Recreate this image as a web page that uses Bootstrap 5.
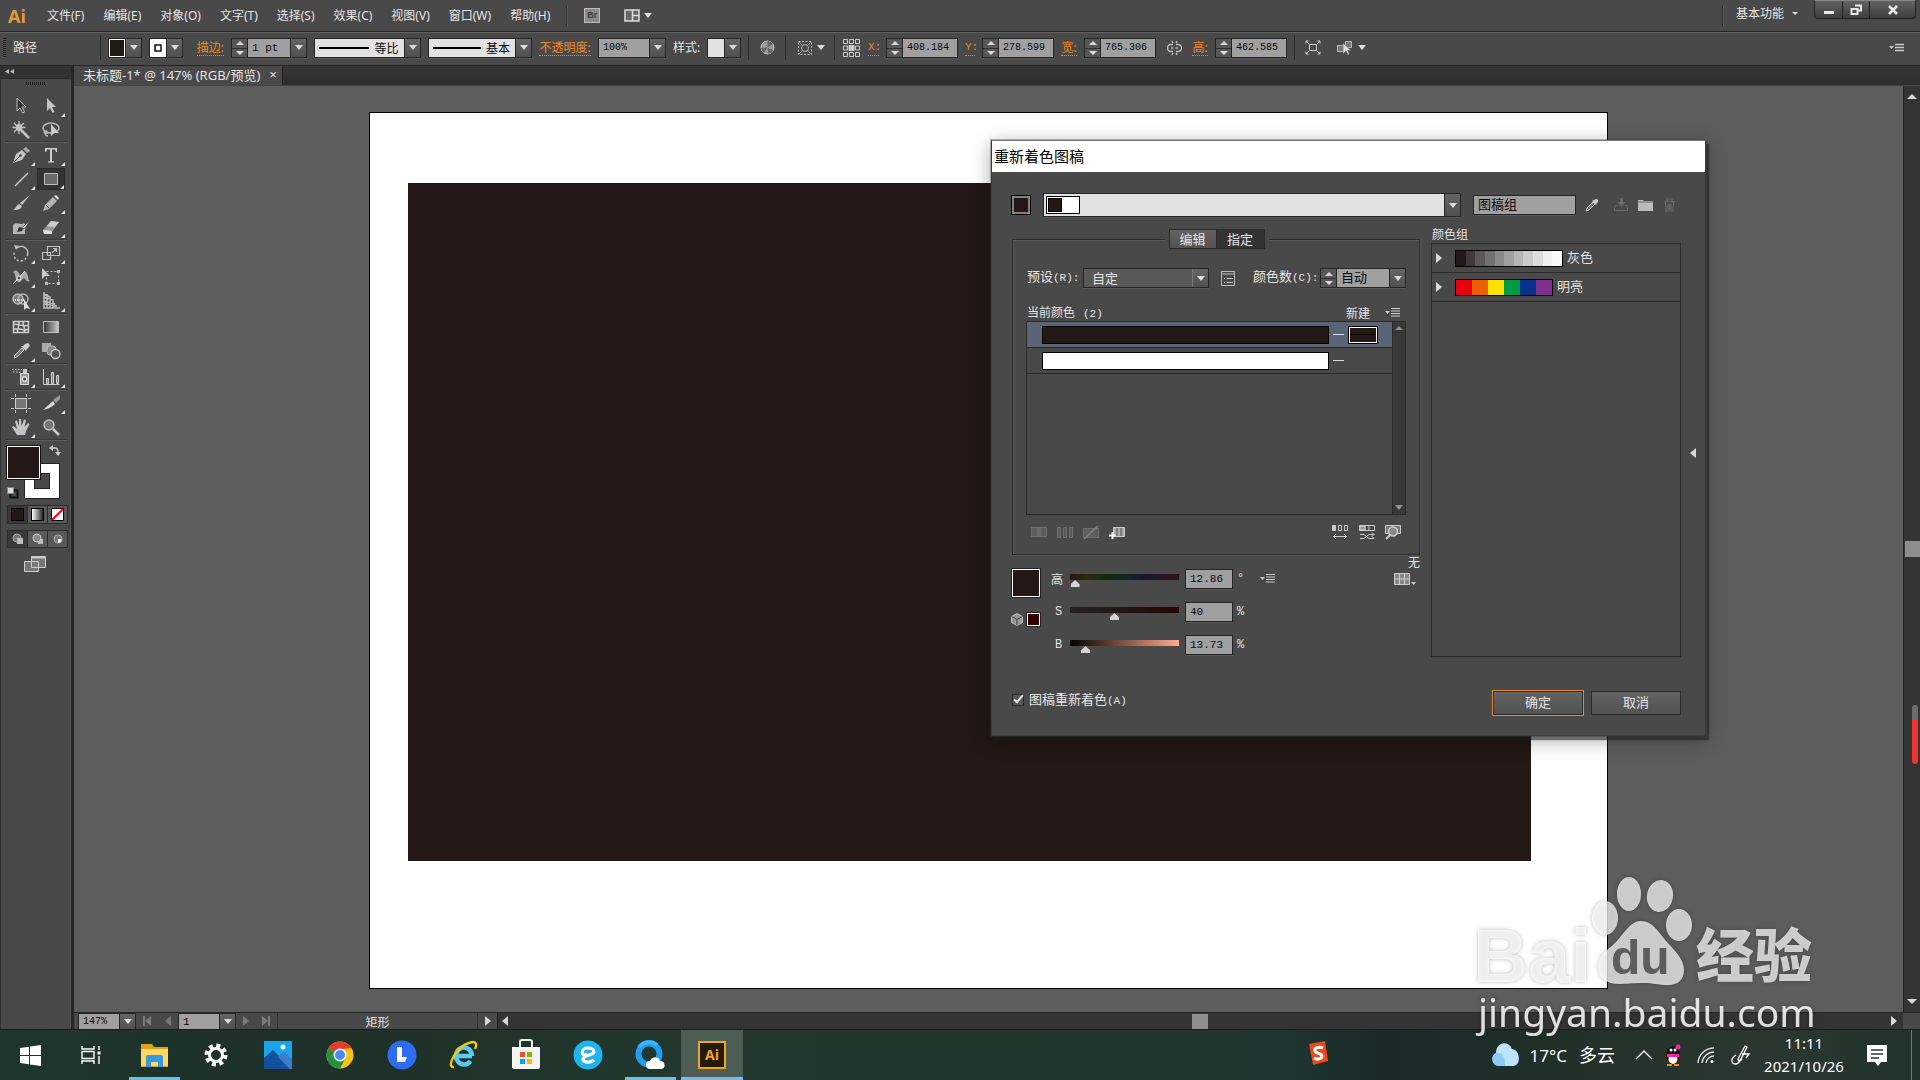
<!DOCTYPE html>
<html lang="zh-CN">
<head>
<meta charset="utf-8">
<meta name="viewport" content="width=device-width, initial-scale=1">
<title>未标题-1 - Adobe Illustrator</title>
<link href="https://cdn.jsdelivr.net/npm/bootstrap@5.3.0/dist/css/bootstrap.min.css" rel="stylesheet">
<style>
:root{--panel:#494949;--line:#252525;--light:#626262;--field:#a0a0a0;--ink:#e4e4e4;--orange:#e98a28;--art:#231815}
body{font:12px/16px "Noto Sans","Noto Sans CJK SC",sans-serif;color:var(--ink);background:#5d5d5d;overflow:hidden}
button,input,select{font:inherit;color:inherit;border:0;padding:0;margin:0;background:none;border-radius:0}
select{appearance:none;min-width:0}
svg{display:block;flex:none}
.ui-cjk{font-family:"Noto Sans CJK SC",sans-serif}
.ui-mono{font-family:"Liberation Mono","Noto Sans CJK SC",monospace}
.m10{font-size:10px}.m11{font-size:11px}
/* application bar */
.appbar{height:31px;background:var(--panel)}
.applogo{width:47px;padding-left:8px;font:700 18px/24px "Noto Sans",sans-serif;color:#dc9c3c}
.menus{gap:19px}
.vsep{width:1px;background:#333;border-right:1px solid #585858;box-sizing:content-box}
.brbox{width:16px;height:15px;background:#8a8a8a;border:1px solid #bbb;color:#3c3c3c;font:700 9px/13px "Liberation Sans",sans-serif}
.winbtns{height:19px;background:linear-gradient(#626262,#3e3e3e);border:1px solid #222;border-top-color:#888;border-radius:0 0 4px 4px;align-self:flex-start}
.winbtns button+button{border-left:1px solid #222}
/* control bar */
.ctrlbar{height:35px;background:var(--panel);border-top:1px solid var(--line);border-bottom:1px solid var(--line);box-shadow:inset 0 1px 0 var(--light);gap:7px;padding:0 4px 2px 3px}
.ctrlbar>*{flex:none}
.ctrlbar .vsep{height:25px;width:1px;box-sizing:border-box;border:0;background:#303030}
.grip{width:3px;height:20px;background:repeating-linear-gradient(#1c1c1c 0 1px,#555 1px 2px)}
.olabel{color:var(--orange);border-bottom:1px dotted var(--orange);line-height:15px;text-decoration:none;white-space:nowrap;text-align:center}
.olabel:hover{color:#ffab52}
.fld{border:1px solid var(--line);height:20px;background:var(--field);color:#0a0a0a;box-shadow:0 1px 0 #575757}
.fld input,.fld select{flex:1;min-width:0;width:0;height:18px;padding-left:4px;outline:0}
.btnface{width:16px;background:linear-gradient(#646464,#505050);border-left:1px solid var(--line);flex:none}
.dn:after{content:"";width:0;height:0;border:4px solid transparent;border-top:5px solid #dcdcdc;border-bottom:0}
.up:after{content:"";width:0;height:0;border:4px solid transparent;border-bottom:4px solid #d5d5d5;border-top:0}
.tiny:after{border-width:3px;border-top-width:3px}
.spin{width:16px;border-right:1px solid var(--line);background:#575757;flex:none}
.spin button{height:9px}.spin button+button{border-top:1px solid #303030}
.spin .dn:after{border-top-width:4px}
.pale{background:#e2e2e2}
.stroke-line{height:2px;background:#000;flex:none}
/* toolbox */
.toolbox{width:74px;background:var(--panel);border-left:1px solid #303030;border-right:3px solid #262626;box-shadow:inset -1px 0 0 #555}
.toolhead{height:13px;background:#323232;border-bottom:1px solid #282828;width:70px}
.toolgrid{display:grid;grid-template-columns:30px 30px;margin-left:5px;width:61px;padding-bottom:1px;border-top:1px solid #5b5b5b;box-shadow:0 -1px 0 #383838}
.toolgrid.first{border-top:0;box-shadow:none;padding-bottom:0}
.tool{height:24px;position:relative}
.tool svg{width:20px;height:20px}
.tool.more:after{content:"";position:absolute;right:1px;bottom:1px;border-left:4px solid transparent;border-bottom:4px solid #ddd}
.tool.on{background:#333;outline:1px solid #2a2a2a;outline-offset:-1px;margin:1px;height:22px}
.fillstroke{height:59px;position:relative;margin-left:5px}
.fillbox{position:absolute;left:0;top:3px;width:35px;height:35px;background:var(--art);border:1px solid #111;box-shadow:inset 0 0 0 1px #fff;z-index:1}
.strokebox{position:absolute;left:18px;top:21px;width:36px;height:36px;border:10px solid #fff;outline:1px solid #222;outline-offset:-1px;box-shadow:inset 0 0 0 1px #222}
.modes{margin-left:6px;width:61px;border:1px solid #2b2b2b;background:#595959}
.modes>button{flex:1}.modes>button+button{border-left:1px solid #2b2b2b}
/* document */
.tabbar{height:20px;background:linear-gradient(#363636,#2d2d2d);border-bottom:1px solid #444}
.doctab{background:var(--panel);border-right:1px solid #222;padding:0 5px 0 9px;gap:9px;font-size:13px;line-height:19px}
.canvas{background:#5d5d5d;position:relative;overflow:visible}
.artboard{position:absolute;left:295px;top:26px;width:1239px;height:877px;background:#fff;border:1px solid #000}
.artrect{position:absolute;left:38px;top:70px;width:1123px;height:678px;background:var(--art)}
.vbar{width:17px;background:#343434;border-left:1px solid #222;position:relative}
.vbar .thumb{height:16px;width:15px;background:#8e8e8e}
.vbar .up:after{border-width:5px;border-top-width:0}
.vbar .dn:after{border-width:5px;border-bottom-width:0}
.statusbar{height:17px;background:var(--panel);border-top:1px solid #262626}
.statusbar .fld{height:16px;border-bottom:0}
.statusbar .fld input{height:15px}
.statusbar .hbar{background:#343434;border-left:1px solid #222;padding:0 6px 0 4px}
.tri-l:after{content:"";border:5px solid transparent;border-right:6px solid #d8d8d8;border-left:0}
.tri-r:after{content:"";border:5px solid transparent;border-left:6px solid #d8d8d8;border-right:0}
.dim{opacity:.35}
.endl{border-left:2px solid #d8d8d8}
.endr{border-right:2px solid #d8d8d8}
.redbar{position:absolute;right:2px;top:619px;width:6px;height:59px;border-radius:3px;background:linear-gradient(#6c6c6c 15px,#ef3434 15px)}
/* recolor window */
.recolor{position:absolute;left:917px;top:54px;width:715px;background:var(--panel);border:1px solid #3a3a3a;border-top-color:#777;box-shadow:0 0 0 1px rgba(60,60,60,.35),3px 4px 1px rgba(30,30,30,.55),0 4px 18px rgba(0,0,0,.35);z-index:5;font-family:"Noto Sans CJK SC",sans-serif}
.rtitle{height:31px;background:#fff;color:#000;font-size:15px;line-height:29px;padding-left:2px}
.rbody{padding:21px 24px 19px 19px;position:relative}
.sw{border:1px solid #000;background:var(--art)}
.icbtn{width:24px;height:20px;display:flex;align-items:center;justify-content:center}
.assignbox{border:1px solid #2a2a2a;box-shadow:1px 1px 0 #575757,inset 1px 1px 0 #575757;margin:-10px 0 0 1px;padding:28px 13px 13px}
.tabs2{background:var(--panel);padding:0 4px;position:relative;z-index:1;margin-left:2px}
.tabs2 button{width:48px;height:20px;border:1px solid #2a2a2a;background:linear-gradient(#626262,#525252);font-size:13px;line-height:15px;padding-bottom:2px}
.tabs2 button.on{background:#333;border-left:0}
.t13{font-size:13px}
.clist{height:194px;border:1px solid #2a2a2a}
.crow{height:26px;border-bottom:1px solid #2a2a2a;padding:0 14px 0 15px;gap:4px}
.crow.on{background:#5a6475}
.cbar{width:287px;height:18px;border:1px solid #000}
.cdash{width:11px;height:1px;background:#ddd}
.cscroll{width:14px;background:#383838;border-left:1px solid #2a2a2a}
.cscroll .up:after,.cscroll .dn:after{opacity:.55}
.sl{appearance:none;display:block;width:109px;height:14px;background-size:100% 6px;background-repeat:no-repeat;position:relative;outline:0;margin-top:5px}
.sl::-webkit-slider-runnable-track{height:14px}
.sl::-webkit-slider-thumb{appearance:none;width:9px;height:7px;margin-top:6px;background:#d6d6d6;clip-path:polygon(50% 0,100% 60%,100% 100%,0 100%,0 60%)}
.sl.h{background-image:linear-gradient(90deg,#2a1614,#29290f,#15290f,#122923,#141a2c,#29152a,#2a1614)}
.sl.s{background-image:linear-gradient(90deg,#232323,#230800)}
.sl.b{background-image:linear-gradient(90deg,#000,#ffac90)}
.hsb{gap:14px;padding-top:1px}
.hsbrow{height:19px}
.hsbrow label{width:19px}
.hsbrow .fld{width:48px;margin:0 4px 0 6px}
.ck{appearance:none;width:12px;height:12px;border:1px solid #2a2a2a;background:#555;position:relative}
.ck:checked:after{content:"";position:absolute;left:3px;top:-2px;width:5px;height:10px;border:solid #e8e8e8;border-width:0 2px 2px 0;transform:rotate(40deg)}
.glist{height:414px;border:1px solid #2a2a2a}
.grow{height:29px;border-bottom:1px solid #2a2a2a;font-size:13px;line-height:14px}
.grow span+span{padding-bottom:3px}
.strip{border:1px solid #000;height:17px}
.rbtn{width:90px;height:24px;border:1px solid #2a2a2a;background:linear-gradient(#636363,#525252);font-size:13px;padding-bottom:2px}
.rbtn.ok{outline:1px solid var(--orange)}
/* watermark */
.wmark{position:absolute;left:1390px;top:780px;z-index:6;pointer-events:none;filter:drop-shadow(0 0 2px rgba(0,0,0,.35))}
/* taskbar */
.taskbar{height:51px;background:linear-gradient(90deg,#1e352e 0,#1d3029 15%,#22372d 35%,#20362e 60%,#1f352f 67%,#1a2a2b 72%,#1f3029 80%,#2b3730 92%,#1f332c 100%);border-top:1px solid #1c1c1c}
.tk{width:62px;position:relative}
.tk.run:after{content:"";position:absolute;left:6px;right:5px;bottom:0;height:3px;background:#76b9ed}
.tk.act{background:#4c5e55}.tk.act:after{left:0;right:0}
.tray{font:17px/20px "Noto Sans","Noto Sans CJK SC",sans-serif;color:#fff}
.clock{font-size:15px;line-height:23px;width:106px}
</style>
<script src="https://cdn.jsdelivr.net/npm/bootstrap@5.3.0/dist/js/bootstrap.bundle.min.js"></script>
</head>
<body class="vh-100 d-flex flex-column">

<header class="appbar d-flex align-items-center flex-shrink-0">
  <div class="applogo">Ai</div>
  <nav class="menus d-flex">
    <button>文件(F)</button><button>编辑(E)</button><button>对象(O)</button><button>文字(T)</button><button>选择(S)</button><button>效果(C)</button><button>视图(V)</button><button>窗口(W)</button><button>帮助(H)</button>
  </nav>
  <div class="vsep ms-3" style="height:20px"></div>
  <button class="brbox ms-3" aria-label="Bridge">Br</button>
  <button class="ms-4 d-flex align-items-center gap-1 dn" aria-label="排列文档"><svg width="16" height="13"><path d="M1 1h14v11H1zM8.500 1v11M8.500 6.500H15" fill="#666" stroke="#ddd" stroke-width="1.500"/></svg></button>
  <div class="ms-auto d-flex align-items-center h-100">
    <div class="vsep" style="height:20px"></div>
    <button class="ms-2 ps-1 d-flex align-items-center dn tiny gap-2 me-3" style="padding:0 0 4px">基本功能</button>
    <div class="winbtns d-flex me-1">
      <button style="width:27px" class="d-flex justify-content-center align-items-center" aria-label="最小化"><svg width="12" height="12"><path d="M1 7h10v3H1z" fill="#e8e8e8"/></svg></button>
      <button style="width:27px" class="d-flex justify-content-center align-items-center" aria-label="还原"><svg width="13" height="12"><path d="M5 1.500h6v5H8M1.500 5h6v5h-6z" fill="none" stroke="#e8e8e8" stroke-width="2"/></svg></button>
      <button style="width:46px" class="d-flex justify-content-center align-items-center" aria-label="关闭"><svg width="12" height="12"><path d="M2 2l8 8M10 2l-8 8" stroke="#e8e8e8" stroke-width="2.600"/></svg></button>
    </div>
  </div>
</header>

<div class="ctrlbar d-flex align-items-center flex-shrink-0">
  <div class="grip"></div>
  <div style="width:80px">路径</div>
  <div class="vsep"></div>
  <button class="fld d-flex" style="width:34px" aria-label="填色"><span class="flex-fill h-100" style="background:var(--art);box-shadow:inset 0 0 0 1px #fff"></span><span class="btnface h-100 dn d-flex align-items-center justify-content-center"></span></button>
  <button class="fld d-flex" style="width:34px" aria-label="描边颜色"><span class="flex-fill h-100 bg-white d-flex align-items-center justify-content-center"><svg width="8" height="8"><path d="M1 1h6v6H1z" fill="#fff" stroke="#111" stroke-width="1.500"/></svg></span><span class="btnface h-100 dn d-flex align-items-center justify-content-center"></span></button>
  <div class="text-end" style="width:34px"><a href="#" class="olabel d-inline-block">描边:</a></div>
  <div class="fld d-flex ui-mono m11" style="width:76px"><span class="spin d-flex flex-column"><button class="up d-flex justify-content-center align-items-center" aria-label="增加"></button><button class="dn d-flex justify-content-center align-items-center" aria-label="减少"></button></span><input value="1 pt" aria-label="描边粗细"><button class="btnface dn d-flex align-items-center justify-content-center" aria-label="选择粗细"></button></div>
  <button class="fld pale d-flex align-items-center ui-cjk" style="width:107px" aria-label="宽度配置"><span class="stroke-line ms-1" style="width:50px"></span><span class="flex-fill text-center">等比</span><span class="btnface h-100 dn d-flex align-items-center justify-content-center"></span></button>
  <button class="fld pale d-flex align-items-center ui-cjk" style="width:104px" aria-label="画笔"><span class="stroke-line ms-1" style="width:48px"></span><span class="flex-fill text-center">基本</span><span class="btnface h-100 dn d-flex align-items-center justify-content-center"></span></button>
  <a href="#" class="olabel" style="width:52px">不透明度:</a>
  <div class="fld d-flex ui-mono m10" style="width:68px"><input value="100%" aria-label="不透明度"><button class="btnface dn d-flex align-items-center justify-content-center" aria-label="选择不透明度"></button></div>
  <div style="width:27px;white-space:nowrap">样式:</div>
  <button class="fld d-flex pale" style="width:34px" aria-label="样式"><span class="flex-fill"></span><span class="btnface h-100 dn d-flex align-items-center justify-content-center"></span></button>
  <div class="vsep"></div>
  <button class="d-flex justify-content-center" style="width:22px" aria-label="重新着色图稿"><svg width="15" height="15"><circle cx="7.500" cy="7.500" r="6.500" fill="#999" stroke="#bbb"/><path d="M7.500 7.500V1A6.500 6.500 0 0 1 13 4zM7.500 7.500L1 8a6.500 6.500 0 0 0 3 5zM7.500 7.500l6 3a6.500 6.500 0 0 1-5 3.500z" fill="#666"/></svg></button>
  <div class="vsep"></div>
  <button class="d-flex align-items-center justify-content-between dn" style="width:34px;padding:0 2px 0 4px" aria-label="对齐"><svg width="16" height="16" fill="none" stroke="#bbb"><path d="M1.500 1.500h13v13h-13z" stroke-dasharray="2 1.500"/><circle cx="8" cy="8" r="3.500"/><path d="M2 2l4 4M14 2l-4 4M2 14l4-4M14 14l-4-4" stroke="#999"/></svg></button>
  <div class="vsep"></div>
  <button style="width:19px" aria-label="参考点"><svg width="19" height="20" fill="none" stroke="#ccc"><path d="M1.500 1.500h4v4h-4zM7.500 1.500h4v4h-4zM13.500 1.500h4v4h-4zM1.500 8h4v4h-4zM13.500 8h4v4h-4zM1.500 14.500h4v4h-4zM7.500 14.500h4v4h-4zM13.500 14.500h4v4h-4z"/><path d="M7 7.500h5v5H7z" fill="#ccc"/></svg></button>
  <a href="#" class="olabel ui-mono m11" style="width:11px">X:</a>
  <div class="fld d-flex ui-mono m10" style="width:72px"><span class="spin d-flex flex-column"><button class="up d-flex justify-content-center align-items-center" aria-label="增加"></button><button class="dn d-flex justify-content-center align-items-center" aria-label="减少"></button></span><input value="408.184 :" aria-label="X"></div>
  <a href="#" class="olabel ui-mono m11" style="width:10px">Y:</a>
  <div class="fld d-flex ui-mono m10" style="width:72px"><span class="spin d-flex flex-column"><button class="up d-flex justify-content-center align-items-center" aria-label="增加"></button><button class="dn d-flex justify-content-center align-items-center" aria-label="减少"></button></span><input value="278.599 :" aria-label="Y"></div>
  <a href="#" class="olabel" style="width:16px">宽:</a>
  <div class="fld d-flex ui-mono m10" style="width:72px"><span class="spin d-flex flex-column"><button class="up d-flex justify-content-center align-items-center" aria-label="增加"></button><button class="dn d-flex justify-content-center align-items-center" aria-label="减少"></button></span><input value="765.306 :" aria-label="宽"></div>
  <button class="d-flex justify-content-center" style="width:22px" aria-label="约束宽高比例"><svg width="15" height="16" fill="none" stroke="#bbb" stroke-width="1.500"><path d="M6 4.500H4a3.500 3.500 0 0 0 0 7h2M9 4.500h2a3.500 3.500 0 0 1 0 7H9M4 8h2.500M8.500 8H11M5 1l1 2M10 1L9 3M5 15l1-2M10 15l-1-2"/></svg></button>
  <a href="#" class="olabel" style="width:16px">高:</a>
  <div class="fld d-flex ui-mono m10" style="width:72px"><span class="spin d-flex flex-column"><button class="up d-flex justify-content-center align-items-center" aria-label="增加"></button><button class="dn d-flex justify-content-center align-items-center" aria-label="减少"></button></span><input value="462.585 :" aria-label="高"></div>
  <div class="vsep"></div>
  <button class="d-flex justify-content-center" style="width:22px" aria-label="隔离选中的对象"><svg width="16" height="15" fill="none" stroke="#ccc"><path d="M4.500 4.500h7v6h-7zM1 1l3 3M15 1l-3 3M1 14l3-3M15 14l-3-3M1 3.500V1h2.500M15 3.500V1h-2.500M1 11.500V14h2.500M15 11.500V14h-2.500"/></svg></button>
  <button class="d-flex align-items-center justify-content-between dn" style="width:35px;padding-left:5px" aria-label="选择类似的对象"><svg width="18" height="16" fill="none" stroke="#bbb"><path d="M1.500 5.500h6v6h-6zM9.500 1.500h6v6h-6z" fill="#777"/><path d="M7 3v11l3-3 2 4 1.500-1-2-3.500H15z" fill="#ddd" stroke="#555" stroke-width=".5"/></svg></button>
  <button class="ms-auto me-2 pe-1" aria-label="面板菜单"><svg width="15" height="10" stroke="#ccc"><path d="M0 3h5L2.500 6z" fill="#ccc" stroke="none"/><path d="M6 1.500h9M6 4.500h9M6 7.500h9" stroke-width="1.500"/></svg></button>
</div>

<main class="d-flex flex-fill" style="min-height:0">
  <aside class="toolbox flex-shrink-0">
    <div class="toolhead"><svg width="14" height="12" class="ms-1"><path d="M4 3v5L0 5.500zM9 3v5L5 5.500z" fill="#bbb"/></svg></div>
    <div class="d-flex justify-content-center" style="height:15px;padding-top:3px"><div style="width:20px;height:3px;background:repeating-linear-gradient(90deg,#161616 0 1px,#555 1px 2px)"></div></div>
    <div class="toolgrid first">
      <button class="tool d-flex align-items-center justify-content-center" aria-label="选择"><svg viewBox="0 0 20 20"><path d="M6 2v13l3-3 2.500 5 2-1-2.500-5H15z" fill="#333" stroke="#bbb"/></svg></button>
      <button class="tool more d-flex align-items-center justify-content-center" aria-label="直接选择"><svg viewBox="0 0 20 20"><path d="M6 2v13l3-3 2.500 5 2-1-2.500-5H15z" fill="#c4c4c4"/></svg></button>
      <button class="tool d-flex align-items-center justify-content-center" aria-label="魔棒"><svg viewBox="0 0 20 20" stroke="#c4c4c4"><path d="M8 1v13M1.500 7.500h13M3 3l10 10M13 3L3 12" stroke-width="1.300"/><circle cx="8" cy="7.500" r="3" fill="#c4c4c4"/><path d="M10 10l8 8" stroke-width="2.500"/></svg></button>
      <button class="tool d-flex align-items-center justify-content-center" aria-label="套索"><svg viewBox="0 0 20 20" fill="none" stroke="#b8b8b8" stroke-width="1.600"><ellipse cx="10" cy="8" rx="8" ry="5"/><path d="M4 11c-2 2 1 3 2 2s-1-3-2-1c0 3 1 4 3 4"/><path d="M10 4v12l3-3h5z" fill="#ccc" stroke="none"/></svg></button>
    </div>
    <div class="toolgrid">
      <button class="tool more d-flex align-items-center justify-content-center" aria-label="钢笔"><svg viewBox="0 0 20 20"><path d="M2 18L5 9l6-4 4 4-4 6z" fill="#c4c4c4"/><path d="M12 4l3-2 4 4-3 2z" fill="#aaa"/><path d="M3 17l6-6" stroke="#444"/><circle cx="9.500" cy="10.500" r="1.300" fill="#444"/></svg></button>
      <button class="tool more d-flex align-items-center justify-content-center" aria-label="文字"><svg viewBox="0 0 20 20"><path d="M4 3h12v4h-1l-1-2.500h-3V16l2 .5v1H7v-1l2-.5V4.500H6L5 7H4z" fill="#ccc"/></svg></button>
      <button class="tool more d-flex align-items-center justify-content-center" aria-label="直线段"><svg viewBox="0 0 20 20"><path d="M4 17L17 4" stroke="#ccc" stroke-width="1.400"/></svg></button>
      <button class="tool more on d-flex align-items-center justify-content-center" aria-label="矩形"><svg viewBox="0 0 20 20"><path d="M3.500 4.500h13v11h-13z" fill="#6a6a6a" stroke="#bbb"/></svg></button>
      <button class="tool d-flex align-items-center justify-content-center" aria-label="画笔工具"><svg viewBox="0 0 20 20"><path d="M19 2L9 10l2 2z" fill="#c4c4c4"/><path d="M8 11l3 2c-1 4-5 4-9 4 3-1 3-5 6-6z" fill="#c4c4c4"/></svg></button>
      <button class="tool more d-flex align-items-center justify-content-center" aria-label="铅笔"><svg viewBox="0 0 20 20"><path d="M2 18l2-6 8-8 4 4-8 8z" fill="#b4b4b4"/><path d="M13 3l2-1 3 3-1 2z" fill="#ddd"/><path d="M5 12l3 3" stroke="#444"/></svg></button>
      <button class="tool d-flex align-items-center justify-content-center" aria-label="斑点画笔"><svg viewBox="0 0 20 20"><path d="M2 8c4-4 7 1 11-2l2 4-1 3v4H2z" fill="#b4b4b4"/><path d="M20 3l-7 6-5 4 6-2z" fill="#eee" stroke="#333" stroke-width=".7"/><path d="M8 10l4 1-1 3-5 1z" fill="#333"/></svg></button>
      <button class="tool more d-flex align-items-center justify-content-center" aria-label="橡皮擦"><svg viewBox="0 0 20 20"><path d="M2 13L10 4l8 1-7 10-8 2z" fill="#999"/><path d="M10 4l8 1-4 5-8-1z" fill="#ccc"/><path d="M2 13l9 1v3H3z" fill="#ddd"/></svg></button>
    </div>
    <div class="toolgrid">
      <button class="tool more d-flex align-items-center justify-content-center" aria-label="旋转"><svg viewBox="0 0 20 20" fill="none" stroke="#c0c0c0" stroke-width="1.500"><path d="M6 5a6.500 6.500 0 0 1 10 8"/><path d="M15 15A6.500 6.500 0 0 1 4 8" stroke-dasharray="2 2"/><path d="M3 2l5 1-3 4z" fill="#c0c0c0" stroke="none"/></svg></button>
      <button class="tool more d-flex align-items-center justify-content-center" aria-label="比例缩放"><svg viewBox="0 0 20 20" fill="none" stroke="#c0c0c0" stroke-width="1.200"><path d="M6.500 3.500h12v9h-12zM1.500 9.500h8v7h-8zM11 10l4-4M12 5.500h3.500V9"/></svg></button>
      <button class="tool more d-flex align-items-center justify-content-center" aria-label="宽度"><svg viewBox="0 0 20 20"><path d="M2 5c5-5 7 4 7 5s3-7 6-5c3 3 1 7 4 9-4 2-5-3-6-3s-3 5-6 4c-4-3-1-7-5-10z" fill="#aaa"/><path d="M2 17L14 4" stroke="#fff"/><circle cx="8" cy="11" r="2" fill="#444" stroke="#fff"/></svg></button>
      <button class="tool d-flex align-items-center justify-content-center" aria-label="自由变换"><svg viewBox="0 0 20 20"><path d="M5.500 4.500h12v12h-12z" fill="none" stroke="#ccc" stroke-dasharray="2 2"/><path d="M1 1v11l3-3h5z" fill="#ccc"/><path d="M4 15h3v3H4zM16 15h3v3h-3zM16 3h3v3h-3z" fill="#bbb"/></svg></button>
      <button class="tool more d-flex align-items-center justify-content-center" aria-label="形状生成器"><svg viewBox="0 0 20 20" fill="none" stroke="#bbb" stroke-width="1.300"><circle cx="7" cy="8" r="5" fill="#777"/><circle cx="12" cy="8" r="5"/><path d="M2 9h12" stroke="#fff" stroke-dasharray="1 1"/><path d="M13 8v11l2-2 4 1z" fill="#ddd" stroke="none"/></svg></button>
      <button class="tool more d-flex align-items-center justify-content-center" aria-label="透视网格"><svg viewBox="0 0 20 20" fill="none" stroke="#bbb" stroke-width="1.500"><path d="M3 1v16h16M3 3l6 3v11M3 6l9 3v8M3 10l11 3M6 3v14M3 13l13 2"/></svg></button>
    </div>
    <div class="toolgrid">
      <button class="tool d-flex align-items-center justify-content-center" aria-label="网格"><svg viewBox="0 0 20 20" fill="none" stroke="#ccc" stroke-width="1.500"><path d="M2.500 4.500h15v11h-15zM2 8c5-3 8 3 16 0M2 13c5-4 10 2 16-1M7 4c4 4-3 8 0 12M13 4c-3 4 3 8 0 12"/></svg></button>
      <button class="tool d-flex align-items-center justify-content-center" aria-label="渐变"><svg viewBox="0 0 20 20"><defs><linearGradient id="gr"><stop stop-color="#333"/><stop offset="1" stop-color="#ccc"/></linearGradient></defs><path d="M2.500 4.500h15v11h-15z" fill="url(#gr)" stroke="#bbb"/></svg></button>
      <button class="tool more d-flex align-items-center justify-content-center" aria-label="吸管"><svg viewBox="0 0 20 20"><path d="M3 17l1-3 7-7 2 2-7 7z" fill="#777" stroke="#ccc"/><path d="M10 5l5 5 1-2 2-2c2-3-1-5-4-3l-2 2z" fill="#ccc"/></svg></button>
      <button class="tool d-flex align-items-center justify-content-center" aria-label="混合"><svg viewBox="0 0 20 20"><path d="M1 2h9v9H1z" fill="#aaa"/><rect x="6" y="5" width="9" height="9" rx="3" fill="#888" stroke="#bbb"/><circle cx="14.500" cy="13" r="4.500" fill="#555" stroke="#ccc" stroke-width="1.300"/></svg></button>
    </div>
    <div class="toolgrid">
      <button class="tool more d-flex align-items-center justify-content-center" aria-label="符号喷枪"><svg viewBox="0 0 20 20"><path d="M9.500 6.500h8v11h-8z" fill="#999" stroke="#ddd"/><path d="M12 2h4v4h-4z" fill="#ccc"/><path d="M1 2.500h10M2 5h8" stroke="#ddd" stroke-dasharray="1.500 1.500"/><circle cx="13.500" cy="12" r="3" fill="#ddd"/><circle cx="13.500" cy="12" r="1.500" fill="#444"/></svg></button>
      <button class="tool more d-flex align-items-center justify-content-center" aria-label="柱形图"><svg viewBox="0 0 20 20" stroke="#ccc"><path d="M2.500 2v15.500h16" fill="none"/><path d="M5.500 11.500h2v5h-2zM10.500 5.500h2v11h-2zM15.500 8.500h2v8h-2z" fill="#888"/></svg></button>
    </div>
    <div class="toolgrid">
      <button class="tool d-flex align-items-center justify-content-center" aria-label="画板"><svg viewBox="0 0 20 20" stroke="#ccc"><path d="M4.500 5.500h11v10h-11z" fill="#777"/><path d="M4.500 1v3M15.500 1v3M4.500 17v3M15.500 17v3M0 5.500h3M17 5.500h3M0 15.500h3M17 15.500h3"/></svg></button>
      <button class="tool more d-flex align-items-center justify-content-center" aria-label="切片"><svg viewBox="0 0 20 20"><path d="M2 17L12 8l2 3c-3 3-7 5-12 6z" fill="#ddd"/><path d="M12 7l7-5v4l-4 4z" fill="#999"/></svg></button>
      <button class="tool more d-flex align-items-center justify-content-center" aria-label="抓手"><svg viewBox="0 0 20 20"><path d="M6 18L1 10l1.500-1L6 12 4 4l2-.500L8 9V2h2l.500 7L13 2.500l2 .500-1.500 7L17 6l1.500 1L15 14l-1 4z" fill="#c4c4c4"/></svg></button>
      <button class="tool d-flex align-items-center justify-content-center" aria-label="缩放"><svg viewBox="0 0 20 20"><circle cx="8" cy="8" r="5" fill="#777" stroke="#bbb" stroke-width="1.500"/><path d="M12 12l6 6" stroke="#ccc" stroke-width="2.500"/></svg></button>
    </div>
    <div class="toolgrid"></div>
    <div class="fillstroke">
      <div class="fillbox"></div><div class="strokebox"></div>
      <svg width="12" height="12" style="position:absolute;left:43px;top:3px" fill="none" stroke="#ccc" stroke-width="1.300"><path d="M3 3h3q3 0 3 4"/><path d="M0 3l4-3v6zM6 7h6l-3 4z" fill="#ccc" stroke="none"/></svg>
      <svg width="13" height="13" style="position:absolute;left:0;top:44px"><path d="M4.500 4.500h7v7h-7z" fill="none" stroke="#111" stroke-width="2"/><path d="M1.500 1.500h6v6h-6z" fill="#ddd" stroke="#888"/></svg>
    </div>
    <div class="modes d-flex mt-1" style="height:19px">
      <button style="background:#393939" class="d-flex align-items-center justify-content-center" aria-label="颜色"><span style="width:13px;height:13px;background:var(--art);border:1px solid #000"></span></button>
      <button class="d-flex align-items-center justify-content-center" aria-label="渐变"><span style="width:13px;height:13px;background:linear-gradient(90deg,#fff,#222);border:1px solid #000"></span></button>
      <button class="d-flex align-items-center justify-content-center" aria-label="无"><svg width="13" height="13"><path d="M.500.500h12v12H.500z" fill="#fff" stroke="#000"/><path d="M1 12L12 1" stroke="red" stroke-width="2"/></svg></button>
    </div>
    <div class="modes d-flex" style="height:18px;margin-top:6px">
      <button style="background:#393939" class="d-flex align-items-center justify-content-center" aria-label="正常绘图"><svg width="12" height="12"><circle cx="5" cy="5" r="4" fill="#777" stroke="#aaa"/><path d="M5 5h6v6H5z" fill="#bbb"/></svg></button>
      <button class="d-flex align-items-center justify-content-center" aria-label="背面绘图"><svg width="12" height="12"><path d="M6 6h5v5H6z" fill="#bbb"/><circle cx="5" cy="5" r="4" fill="#888" stroke="#ccc"/></svg></button>
      <button class="d-flex align-items-center justify-content-center" aria-label="内部绘图"><svg width="12" height="12"><circle cx="6" cy="6" r="4" fill="#777" stroke="#aaa"/><path d="M6 6h4l-1 3-3 1z" fill="#eee"/></svg></button>
    </div>
    <button class="d-block" style="margin:8px 0 0 23px" aria-label="屏幕模式"><svg width="22" height="17" fill="#777" stroke="#ccc"><path d="M.500 5.500h14v10H.500zM7.500.500h14v11h-14z"/><path d="M7 1.500h14" stroke-width="2"/></svg></button>
  </aside>

  <section class="d-flex flex-column flex-fill" style="min-width:0">
    <div class="tabbar d-flex flex-shrink-0"><div class="doctab d-flex">未标题-1* @ 147% (RGB/预览)<button class="ui-mono" aria-label="关闭文档">×</button></div></div>
    <div class="d-flex flex-fill position-relative" style="min-height:0">
      <div class="canvas flex-fill">
        <div class="artboard"><div class="artrect"></div></div>
      </div>
      <div class="vbar d-flex flex-column align-items-center justify-content-between py-1">
        <span class="up mt-1 d-flex"></span><span class="thumb"></span><span class="dn d-flex mb-1"></span>
        <div class="redbar"></div>
      </div>

      <div class="recolor" role="dialog" aria-label="重新着色图稿">
        <div class="rtitle">重新着色图稿</div>
        <div class="rbody">
          <div class="d-flex align-items-center">
            <button class="sw" style="width:20px;height:20px;box-shadow:inset 0 0 0 2px #808080" aria-label="从所选图稿获取颜色"></button>
            <button class="fld pale d-flex align-items-center" style="width:418px;height:24px;margin:0 12px;padding-left:2px" aria-label="活动颜色">
              <span class="bg-white d-flex align-items-center" style="width:34px;height:18px;border:1px solid #000;padding-left:1px"><span class="sw" style="width:14px;height:14px"></span></span>
              <span class="btnface h-100 dn d-flex align-items-center justify-content-center ms-auto"></span></button>
            <div class="fld d-flex t13" style="width:103px"><input value="图稿组" aria-label="颜色组名称" style="height:16px"></div>
            <button class="icbtn ms-1" aria-label="吸管"><svg width="14" height="14"><path d="M1 13l1-3 6-6 2 2-6 6z" fill="#777" stroke="#ccc"/><path d="M7 3l4 4 1-2c3-2 0-6-3-3z" fill="#ccc"/></svg></button>
            <button class="icbtn" style="margin-left:5px" aria-label="保存颜色组"><svg width="15" height="14"><path d="M3 7.500H1.500l-1 2v3h13v-3l-1-2H11" fill="none" stroke="#686868"/><path d="M6 0h3v4h2.500l-4 5-4-5H6z" fill="#686868"/></svg></button>
            <button class="icbtn" aria-label="新建颜色组"><svg width="15" height="12"><path d="M0 1h5l1 1h9v10H0z" fill="#bbb"/><path d="M0 3h15" stroke="#666"/></svg></button>
            <button class="icbtn" aria-label="删除颜色组"><svg width="13" height="14" fill="none" stroke="#686868"><path d="M1 3.500h11M4 3V1h5v2M2.500 4l.500 9h7l.500-9M5 6v6M6.500 6v6M8 6v6" stroke-width="1.200"/></svg></button>
          </div>

          <div class="d-flex" style="margin-top:12px;gap:11px">
            <div style="width:409px">
              <div class="d-flex justify-content-center"><div class="tabs2 d-flex"><button>编辑</button><button class="on">指定</button></div></div>
              <div class="assignbox">
                <div class="d-flex align-items-center t13">
                  <label for="preset" style="width:57px;white-space:nowrap;padding:0 0 2px 1px">预设<span class="ui-mono m11">(R):</span></label>
                  <div class="fld d-flex" style="width:126px;background:#585858;color:var(--ink)"><select id="preset" class="ps-2"><option>自定</option></select><span class="btnface dn d-flex align-items-center justify-content-center" style="border-color:#777"></span></div>
                  <button style="margin:0 18px 0 12px" aria-label="颜色减低选项"><svg width="14" height="15" fill="none" stroke="#bbb"><path d="M.500.500h13v14H.500zM0 3h14M3 7.500h1M5.500 7.500H12M3 11.500h1M5.500 11.500H12"/></svg></button>
                  <label for="ncol" style="width:67px;white-space:nowrap;padding-bottom:2px">颜色数<span class="ui-mono m11">(C):</span></label>
                  <div class="fld d-flex flex-fill"><span class="spin d-flex flex-column"><button class="up d-flex justify-content-center align-items-center" aria-label="增加"></button><button class="dn d-flex justify-content-center align-items-center" aria-label="减少"></button></span><select id="ncol" style="height:16px"><option>自动</option></select><span class="btnface dn d-flex align-items-center justify-content-center"></span></div>
                </div>
                <div class="d-flex align-items-center" style="height:17px;margin-top:16px"><span style="padding-left:1px">当前颜色<span class="ui-mono m11 ms-2">(2)</span></span><span class="ms-auto">新建</span>
                  <button style="margin:0 6px 0 15px" aria-label="列表菜单"><svg width="15" height="9" stroke="#ccc"><path d="M0 3h5L2.500 6z" fill="#ccc" stroke="none"/><path d="M6 .500h9M6 3h9M6 5.500h9M6 8h9"/></svg></button></div>
                <div class="clist d-flex">
                  <div class="flex-fill">
                    <div class="crow on d-flex align-items-center"><span class="cbar" style="background:var(--art)"></span><span class="cdash"></span><span class="sw position-relative" style="width:30px;height:18px;box-shadow:inset 0 0 0 1px #fff"><span class="d-block" style="height:1px;background:#000;margin:7px 2px"></span></span></div>
                    <div class="crow d-flex align-items-center"><span class="cbar bg-white"></span><span class="cdash"></span></div>
                  </div>
                  <div class="cscroll d-flex flex-column align-items-center justify-content-between py-1"><span class="up d-flex"></span><span class="dn d-flex"></span></div>
                </div>
                <div class="d-flex align-items-center" style="height:18px;margin-top:8px;padding:0 4px 0 5px;gap:10px">
                  <button aria-label="合并颜色"><svg width="16" height="16"><path d="M.500 3.500h15v9H.500z" fill="#5c5c5c" stroke="#6e6e6e"/><path d="M6 4h4v8H6z" fill="#6a6a6a"/></svg></button>
                  <button aria-label="分离颜色"><svg width="16" height="16" fill="#5a5a5a" stroke="#707070"><path d="M.500 3.500h3v10h-3zM6.500 3.500h3v10h-3zM12.500 3.500h3v10h-3z"/></svg></button>
                  <button aria-label="排除颜色"><svg width="16" height="16"><path d="M.500 4.500h15v9H.500z" fill="#5e5e5e" stroke="#6e6e6e"/><path d="M1 15L15 2" stroke="#808080" stroke-width="1.500"/></svg></button>
                  <button aria-label="新建行"><svg width="17" height="16"><path d="M4.500 3.500h11v9h-11z" fill="#aaa" stroke="#ccc"/><path d="M8 4v8M12 4v8" stroke="#555"/><path d="M0 11.500h7M3.500 8v7" stroke="#eee" stroke-width="2"/></svg></button>
                  <button class="ms-auto" aria-label="随机更改顺序"><svg width="17" height="16" stroke="#ccc" fill="none"><path d="M.500 1.500h3v5h-3z" fill="#ccc"/><path d="M6.500 1.500h3v5h-3zM12.500 1.500h3v5h-3zM1.500 12.500h13M4 10l-2.500 2.500L4 15M12 10l2.500 2.500L12 15"/></svg></button>
                  <button aria-label="随机更改饱和度"><svg width="16" height="16" stroke="#ccc" fill="none"><path d="M.500 1.500h15v5H.500zM6 1.500v5M10 1.500v5"/><path d="M1 2h5v4H1z" fill="#999"/><path d="M1 10.500h4l5 4h5M1 14.500h4l5-4h5M13 8.500l2 2-2 2M13 12.500l2 2"/></svg></button>
                  <button aria-label="查找颜色"><svg width="17" height="16" fill="none" stroke="#ccc"><path d="M.500 1.500h15v8H.500z" fill="#777"/><circle cx="8" cy="7.500" r="4.500" fill="#888" stroke-width="1.500"/><path d="M5 11l-4 4" stroke-width="2"/></svg></button>
                </div>
              </div>

              <div class="d-flex" style="margin-top:13px">
                <div style="width:40px">
                  <div style="width:30px;height:30px;background:var(--art);border:1px solid #222;box-shadow:inset 0 0 0 1px #fff"></div>
                  <div class="d-flex align-items-center" style="margin-top:14px;gap:3px"><svg width="12" height="13"><path d="M6 .500l5.500 3v6l-5.500 3-5.500-3v-6z" fill="#999" stroke="#bbb"/><path d="M.500 3.500L6 6.500l5.500-3M6 6.500v6" fill="none" stroke="#444"/></svg><span style="width:15px;height:15px;background:#300;border:1px solid #222;box-shadow:inset 0 0 0 1px #fff"></span></div>
                </div>
                <div class="hsb d-flex flex-column">
                  <div class="hsbrow d-flex align-items-center"><label for="hs">高</label><input id="hs" class="sl h" type="range" min="0" max="360" step="0.01" value="2"><div class="fld d-flex ui-mono m11"><input value="12.86" aria-label="色相值"></div><span class="ui-mono">°</span><button style="margin-left:16px" aria-label="颜色模式"><svg width="15" height="9" stroke="#ccc"><path d="M0 3h5L2.500 6z" fill="#ccc" stroke="none"/><path d="M6 .500h9M6 3h9M6 5.500h9M6 8h9"/></svg></button></div>
                  <div class="hsbrow d-flex align-items-center"><label for="ss" class="ui-mono ps-1">S</label><input id="ss" class="sl s" type="range" value="40"><div class="fld d-flex ui-mono m11"><input value="40" aria-label="饱和度值"></div><span class="ui-mono">%</span></div>
                  <div class="hsbrow d-flex align-items-center"><label for="bs" class="ui-mono ps-1">B</label><input id="bs" class="sl b" type="range" step="0.01" value="11"><div class="fld d-flex ui-mono m11"><input value="13.73" aria-label="亮度值"></div><span class="ui-mono">%</span></div>
                </div>
                <div class="ms-auto text-end" style="margin-top:-14px">无
                  <button class="d-block" style="margin:3px 4px 0 0" aria-label="将颜色限制为色板库"><svg width="22" height="13"><path d="M.500.500h15v11H.500z" fill="#888" stroke="#ccc"/><path d="M0 6h16M5.500 0v12M10.500 0v12" stroke="#ccc"/><path d="M17 9h5l-2.500 3z" fill="#ccc"/></svg></button></div>
              </div>
            </div>

            <div style="width:250px">
              <div style="height:14px;line-height:10px;padding-left:1px">颜色组</div>
              <div class="glist">
                <div class="grow d-flex align-items-center"><button class="tri-r d-flex ms-1" aria-label="展开灰色"></button><span class="strip d-flex" style="width:108px;margin:0 4px 0 13px">
                  <i class="flex-fill" style="background:#231815"></i><i class="flex-fill" style="background:#3e3a39"></i><i class="flex-fill" style="background:#595757"></i><i class="flex-fill" style="background:#727171"></i><i class="flex-fill" style="background:#898989"></i><i class="flex-fill" style="background:#9fa0a0"></i><i class="flex-fill" style="background:#b5b5b6"></i><i class="flex-fill" style="background:#c9caca"></i><i class="flex-fill" style="background:#dcdddd"></i><i class="flex-fill" style="background:#efefef"></i><i class="flex-fill" style="background:#f7f8f8"></i></span><span>灰色</span></div>
                <div class="grow d-flex align-items-center"><button class="tri-r d-flex ms-1" aria-label="展开明亮"></button><span class="strip d-flex" style="width:98px;margin:0 4px 0 13px">
                  <i class="flex-fill" style="background:#e60012"></i><i class="flex-fill" style="background:#eb6100"></i><i class="flex-fill" style="background:#ffe100"></i><i class="flex-fill" style="background:#009944"></i><i class="flex-fill" style="background:#0b318f"></i><i class="flex-fill" style="background:#7f2f8e"></i></span><span>明亮</span></div>
              </div>
            </div>
          </div>

          <div class="d-flex align-items-center" style="margin-top:33px;height:26px">
            <label class="d-flex align-items-center align-self-start t13" style="gap:5px;height:19px;padding-left:1px" for="recol"><input class="ck" type="checkbox" id="recol" checked><span>图稿重新着色<span class="ui-mono m11">(A)</span></span></label>
            <button class="rbtn ok ms-auto me-2">确定</button><button class="rbtn">取消</button>
          </div>
          <button class="tri-l d-flex position-absolute" style="right:9px;top:49%" aria-label="隐藏颜色组存储区"></button>
        </div>
      </div>

      <svg class="wmark" width="370" height="180" fill="#fff" fill-opacity=".72">
        <text x="9" y="116" font-family="Liberation Sans, sans-serif" font-weight="700" font-size="76">Bai</text>
        <ellipse cx="141" cy="52" rx="13" ry="17"/><ellipse cx="165" cy="28" rx="12" ry="17"/><ellipse cx="196" cy="30" rx="13" ry="16" transform="rotate(10 196 30)"/><ellipse cx="215" cy="59" rx="13" ry="16"/>
        <path d="M177 55c12 0 18 12 26 21s17 17 17 28c0 12-9 16-20 15-8-1-14-2-23-2s-15 1-22 1c-12 0-21-6-21-18 0-11 10-16 18-24s14-21 25-21z"/>
        <text x="147" y="108" font-family="Liberation Sans, sans-serif" font-weight="700" font-size="48" fill="#5d5d5d" fill-opacity="1">du</text>
        <text x="232" y="111" font-family="Noto Sans CJK SC, sans-serif" font-weight="900" font-size="58">经验</text>
        <text x="14" y="161" font-family="Noto Sans, sans-serif" font-size="39" fill-opacity=".85">jingyan.baidu.com</text>
      </svg>
    </div>

    <div class="statusbar d-flex flex-shrink-0">
      <div class="fld d-flex ui-mono m10" style="width:58px;margin-left:4px"><input value="147%" aria-label="缩放级别"><button class="btnface dn d-flex align-items-center justify-content-center" aria-label="选择缩放"></button></div>
      <div class="d-flex align-items-center justify-content-around" style="width:42px"><button class="tri-l dim endl d-flex" aria-label="首项"></button><button class="tri-l dim d-flex" aria-label="上一项"></button></div>
      <div class="fld d-flex ui-mono m11" style="width:58px"><input value="1" aria-label="画板"><button class="btnface dn d-flex align-items-center justify-content-center" aria-label="选择画板"></button></div>
      <div class="d-flex align-items-center justify-content-around" style="width:41px"><button class="tri-r dim d-flex" aria-label="下一项"></button><button class="tri-r dim endr d-flex" aria-label="末项"></button></div>
      <div class="text-center ui-cjk" style="width:200px;border-left:1px solid #333;line-height:17px">矩形</div>
      <button class="tri-r d-flex align-items-center justify-content-center" style="width:20px;border-left:1px solid #333" aria-label="状态菜单"></button>
      <div class="hbar d-flex flex-fill align-items-center justify-content-between"><span class="tri-l d-flex"></span><span style="width:16px;height:15px;background:#8e8e8e"></span><span class="tri-r d-flex"></span></div>
      <div style="width:17px"></div>
    </div>
  </section>
</main>

<footer class="taskbar d-flex flex-shrink-0 position-relative">
  <button class="tk d-flex align-items-center justify-content-center" aria-label="开始" style="width:61px"><svg width="21" height="21" fill="#fff"><path d="M0 3l9-1.300V10H0zM10 1.500L21 0v10H10zM0 11h9v8.300L0 18zM10 11h11v10l-11-1.500z"/></svg></button>
  <button class="tk d-flex align-items-center justify-content-center" aria-label="任务视图"><svg width="22" height="20" fill="none" stroke="#fff" stroke-width="1.400"><path d="M1 1v3h12V1M1 6.500h12v7H1zM1 19v-3h12v3M18 1v4M18 11v8"/><path d="M16.500 6.500h3v3h-3z" fill="#fff" stroke="none"/></svg></button>
  <button class="tk run d-flex align-items-center justify-content-center" aria-label="文件资源管理器"><svg width="29" height="24"><path d="M1 1h11l2 3h14v20H1z" fill="#e0a018"/><path d="M1 6h27v17H1z" fill="#ffd866"/><path d="M6 24V14q0-2 2-2h13q2 0 2 2v10h-5v-5h-7v5z" fill="#3a96dd"/></svg></button>
  <button class="tk d-flex align-items-center justify-content-center" aria-label="设置"><svg width="24" height="24" viewBox="-12 -12 24 24"><circle r="9.500" fill="none" stroke="#fff" stroke-width="4" stroke-dasharray="4 3.460"/><circle r="6.500" fill="none" stroke="#fff" stroke-width="3"/></svg></button>
  <button class="tk d-flex align-items-center justify-content-center" aria-label="照片"><svg width="28" height="28"><path d="M0 0h28v28H0z" fill="#1aa3e8"/><path d="M0 17l9-8 19 19H0z" fill="#12509c"/><path d="M14 16l6-5 8 7v10h-2z" fill="#3b7dd0"/><circle cx="19" cy="6" r="2.500" fill="#fff"/></svg></button>
  <button class="tk d-flex align-items-center justify-content-center" aria-label="Chrome"><svg width="28" height="28" viewBox="-14 -14 28 28"><circle r="13.500" fill="#fbc116"/><path d="M0 0L-11.700-6.700A13.500 13.500 0 0 1 11.700-6.700L0-6z" fill="#e33b2e"/><path d="M0 0L-11.700-6.700A13.500 13.500 0 0 0 0 13.500L5.500 3z" fill="#229342"/><circle r="6.500" fill="#fff"/><circle r="5" fill="#4a8af4"/></svg></button>
  <button class="tk d-flex align-items-center justify-content-center" aria-label="L"><svg width="30" height="30"><circle cx="15" cy="15" r="14.500" fill="#2f6bf5"/><path d="M10 7h5v10h5l-2 5h-8z" fill="#fff"/></svg></button>
  <button class="tk d-flex align-items-center justify-content-center" aria-label="Internet Explorer"><svg width="30" height="30" fill="none"><path d="M7 16h16M23 16a8 8.500 0 1 0-1.500 5" stroke="#5cc8f5" stroke-width="4.500"/><path d="M5 27C-4 28 8 6 20 3c8-3 8 2 6 6" stroke="#f5c518" stroke-width="2.400"/></svg></button>
  <button class="tk d-flex align-items-center justify-content-center" aria-label="Microsoft Store"><svg width="30" height="32"><path d="M9 9V3q0-2 2-2h8q2 0 2 2v6" fill="none" stroke="#eee" stroke-width="2"/><path d="M1 8h28v20q0 2-2 2H3q-2 0-2-2z" fill="#f4f4f4"/><path d="M9 13h5v5H9z" fill="#f25022"/><path d="M16 13h5v5h-5z" fill="#7fba00"/><path d="M9 20h5v5H9z" fill="#00a4ef"/><path d="M16 20h5v5h-5z" fill="#ffb900"/></svg></button>
  <button class="tk d-flex align-items-center justify-content-center" aria-label="浏览器"><svg width="30" height="30"><circle cx="15" cy="15" r="14.500" fill="#1fb4ee"/><path d="M9 13c0-7 12-6 12-1 0 3-11 3-11 7s8 4 11 1M9 13c1 2 3 2 5 1" fill="none" stroke="#fff" stroke-width="3.200"/></svg></button>
  <button class="tk run d-flex align-items-center justify-content-center" aria-label="QQ浏览器"><svg width="30" height="30"><circle cx="14" cy="14" r="10.500" fill="none" stroke="#1e9df2" stroke-width="6"/><path d="M4 7a12.500 12.500 0 0 1 18-2" fill="none" stroke="#37b4ff" stroke-width="4"/><path d="M15 29a4 4 0 0 1 0-8c2-5 9-5 10 0 6 0 6 8 1 8z" fill="#fff"/></svg></button>
  <button class="tk run act d-flex align-items-center justify-content-center" aria-label="Illustrator"><span class="d-flex align-items-center justify-content-center" style="width:28px;height:28px;background:#261a0b;border:2px solid #f5a21d;color:#f5a21d;font:700 14px/20px 'Noto Sans',sans-serif">Ai</span></button>
  <div class="tray d-flex ms-auto align-items-center">
    <button style="margin-right:162px;padding-bottom:4px" aria-label="搜狗输入法"><svg width="21" height="26"><path d="M1 4l16-3 3 20-15 4z" fill="#ec4a1c"/><path d="M15 8c-4-2-9 0-8 3s7 2 7 5-5 4-8 2" fill="none" stroke="#fff" stroke-width="3"/></svg></button>
    <svg width="28" height="26"><path d="M7 24a7 7 0 0 1-2-13c0-11 13-13 16-4 9 1 9 17 1 17z" fill="#bfe3fb"/><path d="M7 24a7 7 0 0 1-2-13c6-2 10 5 9 13z" fill="#8fcaf5"/></svg>
    <a href="#" class="text-white text-decoration-none" style="margin:0 20px 0 11px;white-space:nowrap">17°C<span class="ms-2 ps-1" style="font-size:18px">多云</span></a>
    <button aria-label="显示隐藏的图标"><svg width="18" height="12"><path d="M1 10l8-8 8 8" fill="none" stroke="#fff" stroke-width="1.400"/></svg></button>
    <button style="margin-left:12px" aria-label="QQ"><svg width="18" height="22"><ellipse cx="8" cy="11" rx="7" ry="9" fill="#111"/><ellipse cx="8" cy="15" rx="4.500" ry="5" fill="#fff"/><path d="M2 10h12v3H2z" fill="#f2a"/><circle cx="6" cy="6" r="1.500" fill="#fff"/><circle cx="10" cy="6" r="1.500" fill="#fff"/><path d="M2 20h5v2H2zM9 20h5v2H9z" fill="#f80"/><circle cx="13" cy="3" r="2.500" fill="#f2a"/></svg></button>
    <button style="margin-left:14px" aria-label="网络"><svg width="18" height="18" fill="none" stroke="#ddd" stroke-width="1.400"><path d="M1 17A16 16 0 0 1 17 2M5 17A12 12 0 0 1 17 6M9 17a8 8 0 0 1 8-7"/><circle cx="15" cy="15.500" r="1.500" fill="#fff" stroke="none"/></svg></button>
    <button style="margin-left:16px" aria-label="Windows Ink"><svg width="20" height="20" fill="none" stroke="#fff" stroke-width="1.300"><path d="M5 10c-6 4-5 9 0 9 3 0 3-3 5-5l6-12-2-1-7 13 1 3 3-3M11 9h7l-3 4"/></svg></button>
    <div class="clock text-center"><div>11:11</div><div>2021/10/26</div></div>
    <button style="margin:0 24px 0 10px" aria-label="通知"><svg width="20" height="21"><path d="M0 0h20v17h-6l-3 4-3-4H0z" fill="#fff"/><path d="M4 5h12M4 9h12M4 13h8" stroke="#243b33" stroke-width="1.400"/></svg></button>
    <div class="h-100 me-1 pe-1" style="border-left:1px solid #6b7a72;width:2px"></div>
  </div>
</footer>
</body>
</html>
